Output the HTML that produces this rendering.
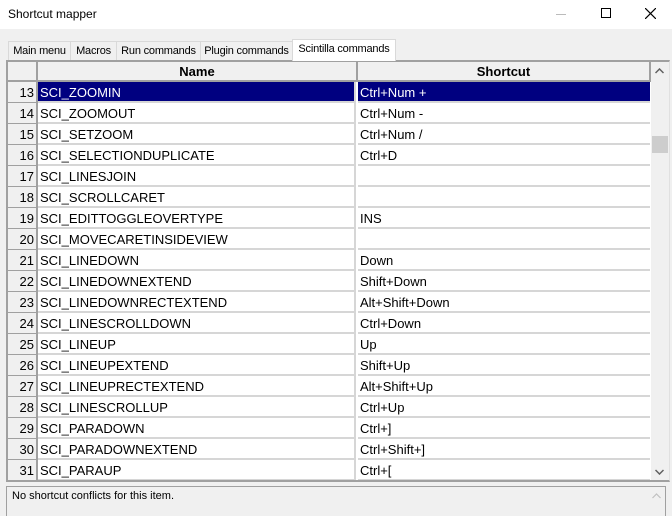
<!DOCTYPE html>
<html><head><meta charset="utf-8"><style>
*{margin:0;padding:0;box-sizing:border-box}
body{width:672px;height:516px;background:#f0f0f0;font-family:"Liberation Sans",sans-serif;position:relative;overflow:hidden}
.title{position:absolute;left:0;top:0;width:672px;height:29px;background:#fff;font-size:12px;}
.title span{position:absolute;left:8px;top:7px}
.tab{position:absolute;top:41px;height:19px;font-size:11px;padding:3px 0 0 0;text-align:center;white-space:nowrap;overflow:hidden;letter-spacing:-0.2px;border:1px solid #d9d9d9;border-bottom:none;background:#f0f0f0}
.grid{position:absolute;left:6px;top:60px;width:664px;height:422px;border:2px solid #a0a0a0;border-right:1px solid #e0e0e0;background:#fff;overflow:hidden}
.r{position:absolute;left:0;height:21px;width:643px;font-size:13px}
.n{position:absolute;left:0;top:0;width:30px;height:21px;background:#f0f0f0;border-right:2px solid #a0a0a0;border-bottom:1px solid #a0a0a0;text-align:right;padding:3px 2px 0 0}
.a{position:absolute;left:30px;top:0;width:318px;height:21px;border-right:2px solid #d6d6d6;border-bottom:2px solid #d6d6d6;padding:3px 0 0 2px}
.b{position:absolute;left:350px;top:0;width:292px;height:21px;border-bottom:2px solid #d6d6d6;padding:3px 0 0 2px}
.sel .a,.sel .b{background:#000080;color:#fff}
.hdr{position:absolute;top:0;height:20px;background:#f0f0f0;border-right:2px solid #a0a0a0;border-bottom:2px solid #a0a0a0;font-weight:bold;font-size:13px;text-align:center;padding-top:2px}
.sb{position:absolute;left:643px;top:0;width:18px;height:420px;background:#f0f0f0}
.panel{position:absolute;left:6px;top:486px;width:660px;height:30px;border:1px solid #a0a0a0;border-bottom:none;background:#f0f0f0;font-size:11px;padding:3px 0 0 5px}
</style></head><body>
<div class="title"><span>Shortcut mapper</span>
<div style="position:absolute;left:556px;top:14px;width:10px;height:1px;background:#bbb"></div>
<div style="position:absolute;left:601px;top:8px;width:10px;height:10px;border:1px solid #000"></div>
<svg style="position:absolute;left:645px;top:8px" width="11" height="11"><path d="M0 0L11 11M11 0L0 11" stroke="#000" stroke-width="1.2"/></svg>
</div>
<div class="tab" style="left:8px;width:63px">Main menu</div>
<div class="tab" style="left:70px;width:47px">Macros</div>
<div class="tab" style="left:116px;width:85px">Run commands</div>
<div class="tab" style="left:200px;width:93px">Plugin commands</div>
<div class="tab" style="left:292px;top:39px;height:22px;width:104px;background:#fff;z-index:2;padding-top:3px">Scintilla commands</div>
<div class="grid">
<div class="hdr" style="left:0;width:30px"></div>
<div class="hdr" style="left:30px;width:320px">Name</div>
<div class="hdr" style="left:350px;width:293px">Shortcut</div>
<div class="r sel" style="top:20px"><div class="n">13</div><div class="a">SCI_ZOOMIN</div><div class="b">Ctrl+Num +</div></div>
<div class="r" style="top:41px"><div class="n">14</div><div class="a">SCI_ZOOMOUT</div><div class="b">Ctrl+Num -</div></div>
<div class="r" style="top:62px"><div class="n">15</div><div class="a">SCI_SETZOOM</div><div class="b">Ctrl+Num /</div></div>
<div class="r" style="top:83px"><div class="n">16</div><div class="a">SCI_SELECTIONDUPLICATE</div><div class="b">Ctrl+D</div></div>
<div class="r" style="top:104px"><div class="n">17</div><div class="a">SCI_LINESJOIN</div><div class="b"></div></div>
<div class="r" style="top:125px"><div class="n">18</div><div class="a">SCI_SCROLLCARET</div><div class="b"></div></div>
<div class="r" style="top:146px"><div class="n">19</div><div class="a">SCI_EDITTOGGLEOVERTYPE</div><div class="b">INS</div></div>
<div class="r" style="top:167px"><div class="n">20</div><div class="a">SCI_MOVECARETINSIDEVIEW</div><div class="b"></div></div>
<div class="r" style="top:188px"><div class="n">21</div><div class="a">SCI_LINEDOWN</div><div class="b">Down</div></div>
<div class="r" style="top:209px"><div class="n">22</div><div class="a">SCI_LINEDOWNEXTEND</div><div class="b">Shift+Down</div></div>
<div class="r" style="top:230px"><div class="n">23</div><div class="a">SCI_LINEDOWNRECTEXTEND</div><div class="b">Alt+Shift+Down</div></div>
<div class="r" style="top:251px"><div class="n">24</div><div class="a">SCI_LINESCROLLDOWN</div><div class="b">Ctrl+Down</div></div>
<div class="r" style="top:272px"><div class="n">25</div><div class="a">SCI_LINEUP</div><div class="b">Up</div></div>
<div class="r" style="top:293px"><div class="n">26</div><div class="a">SCI_LINEUPEXTEND</div><div class="b">Shift+Up</div></div>
<div class="r" style="top:314px"><div class="n">27</div><div class="a">SCI_LINEUPRECTEXTEND</div><div class="b">Alt+Shift+Up</div></div>
<div class="r" style="top:335px"><div class="n">28</div><div class="a">SCI_LINESCROLLUP</div><div class="b">Ctrl+Up</div></div>
<div class="r" style="top:356px"><div class="n">29</div><div class="a">SCI_PARADOWN</div><div class="b">Ctrl+]</div></div>
<div class="r" style="top:377px"><div class="n">30</div><div class="a">SCI_PARADOWNEXTEND</div><div class="b">Ctrl+Shift+]</div></div>
<div class="r" style="top:398px"><div class="n">31</div><div class="a">SCI_PARAUP</div><div class="b">Ctrl+[</div></div>
<div class="sb">
<svg style="position:absolute;left:4px;top:6px" width="9" height="6"><path d="M0.5 5L4.5 1L8.5 5" stroke="#606060" stroke-width="1.5" fill="none"/></svg>
<div style="position:absolute;left:1px;top:74px;width:16px;height:17px;background:#cdcdcd"></div>
<svg style="position:absolute;left:4px;top:407px" width="9" height="6"><path d="M0.5 1L4.5 5L8.5 1" stroke="#606060" stroke-width="1.5" fill="none"/></svg>
</div>
</div>
<div class="panel">No shortcut conflicts for this item.
<svg style="position:absolute;left:645px;top:6px" width="9" height="6"><path d="M0.5 5L4.5 1L8.5 5" stroke="#c0c0c0" stroke-width="1.2" fill="none"/></svg>
</div>
</body></html>
